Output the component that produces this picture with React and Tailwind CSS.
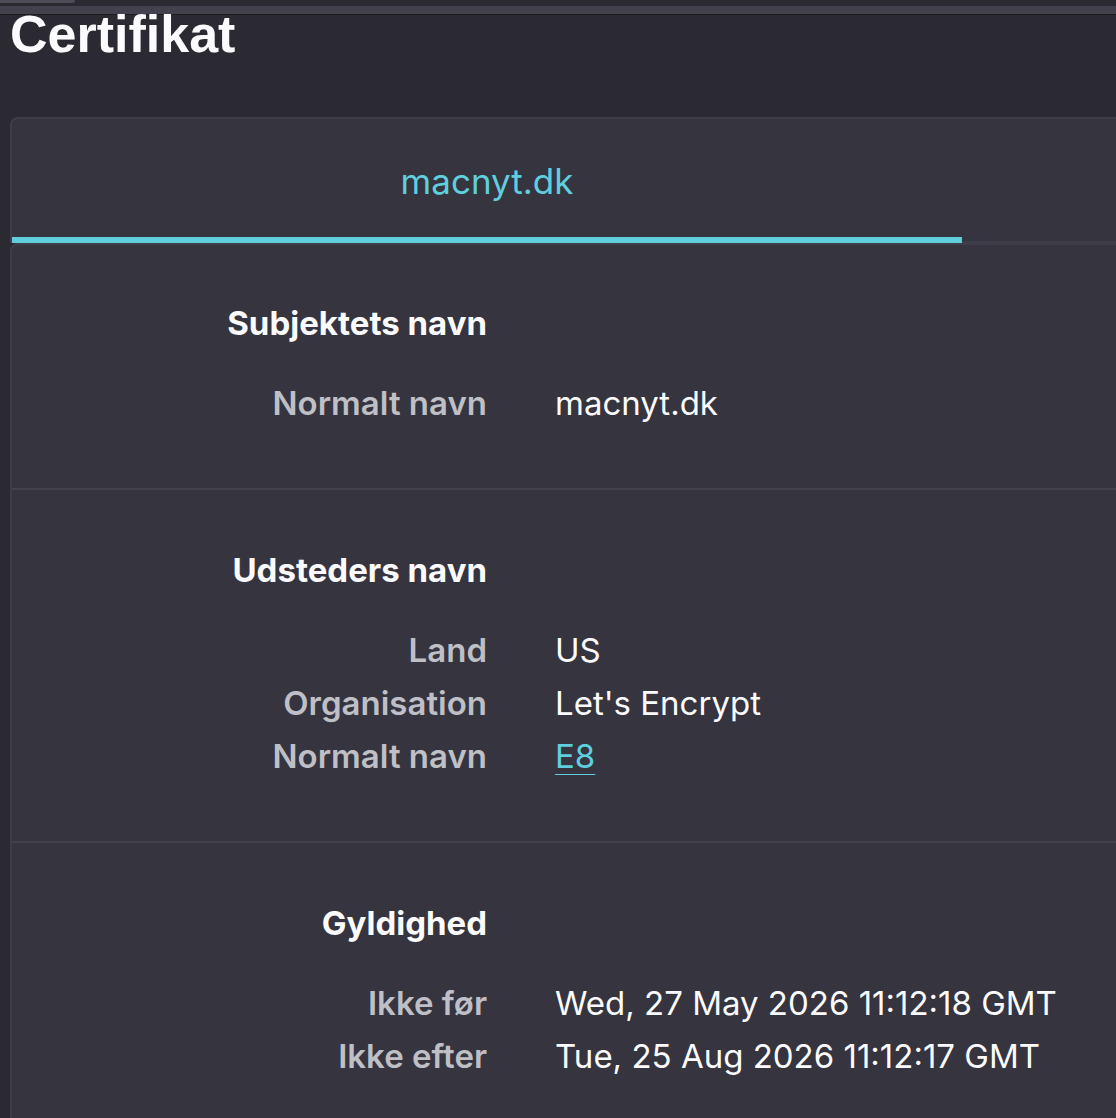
const sections = [
  {
    title: "Subjektets navn",
    rows: [{ label: "Normalt navn", value: "macnyt.dk" }],
  },
  {
    title: "Udsteders navn",
    rows: [
      { label: "Land", value: "US" },
      { label: "Organisation", value: "Let's Encrypt" },
      { label: "Normalt navn", value: "E8", link: true },
    ],
  },
  {
    title: "Gyldighed",
    rows: [
      { label: "Ikke før", value: "Wed, 27 May 2026 11:12:18 GMT" },
      { label: "Ikke efter", value: "Tue, 25 Aug 2026 11:12:17 GMT" },
    ],
  },
]

const Section = ({ title, rows, first }) => {
  return (
    <div
      className={
        first
          ? "pt-[52px] pb-[58px]"
          : "pt-[54px] pb-[58px] border-t-2 border-[#42414c]"
      }
    >
      <div className="grid grid-cols-[475px_1fr] gap-x-[68px] leading-[53px]">
        <div className="text-right font-bold text-[#fbfbfe] mb-[27px]">
          {title}
        </div>
        <div />
        {rows.map((row) => (
          <div key={row.label} className="contents">
            <div className="text-right font-semibold text-[#bfbfc6]">
              {row.label}
            </div>
            <div className="text-[#fbfbfe]">
              {row.link ? (
                <span className="text-[#5fcfdf] underline decoration-1 underline-offset-[6px]">
                  {row.value}
                </span>
              ) : (
                row.value
              )}
            </div>
          </div>
        ))}
      </div>
    </div>
  )
}

const App = () => {
  return (
    <div className="min-h-[1118px] w-full overflow-hidden bg-[#2b2a33] font-['Inter','Noto_Sans',sans-serif] text-[33px]">
      <div className="h-[6px] bg-[#2b2a33]">
        <div className="h-[3px] w-[75px] rounded-br-md bg-[#4d4c58]" />
      </div>
      <div className="h-[8px] bg-[#42414d]" />
      <div className="h-px bg-[#1c1b22]" />

      <h1 className="pl-[10px] font-['Liberation_Sans',Arial,sans-serif] text-[52px] font-bold leading-[38px] text-[#fbfbfe]">
        Certifikat
      </h1>

      <div className="ml-[10px] mt-[64px] w-[1904px]">
        {/* tab header */}
        <div className="flex h-[126px] rounded-tl-lg border-l-2 border-t-2 border-[#3f3e48] bg-[#35343f]">
          <div className="flex w-[950px] items-center justify-center border-b-[6px] border-[#5fcfdf] pt-[6px] text-[35px] text-[#5fcfdf]">
            macnyt.dk
          </div>
          <div className="flex-1 border-b-2 border-[#3f3e48]" />
        </div>

        {/* certificate fields */}
        <div className="rounded-tl-lg border-l-2 border-t-2 border-[#3f3e48] bg-[#35343f]">
          {sections.map((s, i) => (
            <Section key={s.title} title={s.title} rows={s.rows} first={i === 0} />
          ))}
        </div>
      </div>
    </div>
  )
}

export default App
